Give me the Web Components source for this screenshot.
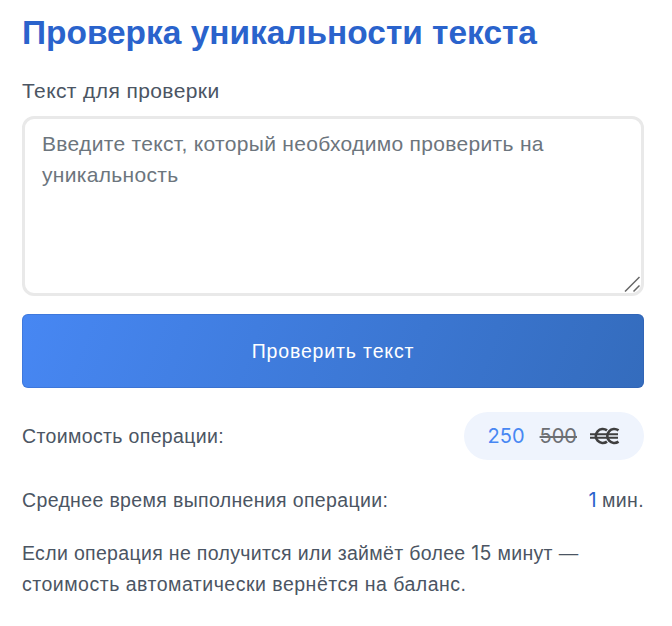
<!DOCTYPE html>
<html lang="ru">
<head>
<meta charset="utf-8">
<style>
  html, body { margin: 0; background: #fff; }
  body { font-family: "Liberation Sans", Arial, sans-serif; color: #4b5563; }
</style>
</head>
<body>
<check-form>
  <span slot="title">Проверка уникальности текста</span>
  <span slot="label">Текст для проверки</span>
  <text-field slot="field" placeholder="Введите текст, который необходимо проверить на уникальность"></text-field>
  <gradient-button slot="action">Проверить текст</gradient-button>
  <info-row slot="cost">
    <span>Стоимость операции:</span>
    <price-pill slot="value" price="250" old="500"></price-pill>
  </info-row>
  <info-row slot="time">
    <span>Среднее время выполнения операции:</span>
    <time-value slot="value" amount="1" unit="мин."></time-value>
  </info-row>
</check-form>

<script>
  class CheckForm extends HTMLElement {
    constructor() {
      super();
      this.attachShadow({ mode: "open" });
      this.shadowRoot.innerHTML = `
        <style>
          :host { display: block; box-sizing: border-box; width: 672px; padding: 12px 28px 0 22px; }
          h1 { margin: 0; font-size: 33.45px; line-height: 42px; font-weight: 700; color: #2a63cc; }
          .label { margin-top: 24px; font-size: 21px; line-height: 26px; letter-spacing: .4px; }
          .field { margin-top: 12px; }
          .action { margin-top: 18px; }
          .rows { margin-top: 24px; display: flex; flex-direction: column; gap: 16px; }
          .note { margin: 14px 0 0; font-size: 19.5px; line-height: 31px; letter-spacing: .33px; }
          .note .wide { letter-spacing: .5px; }
          .digits { font-family: Inter, sans-serif; }
        </style>
        <h1><slot name="title"></slot></h1>
        <div class="label"><slot name="label"></slot></div>
        <div class="field"><slot name="field"></slot></div>
        <div class="action"><slot name="action"></slot></div>
        <div class="rows">
          <slot name="cost"></slot>
          <slot name="time"></slot>
        </div>
        <p class="note">Если операция не получится или займёт более <span class="digits">15</span> минут —<br><span class="wide">стоимость автоматически вернётся на баланс.</span></p>
      `;
    }
  }
  customElements.define("check-form", CheckForm);

  class TextField extends HTMLElement {
    constructor() {
      super();
      this.attachShadow({ mode: "open" });
      this.shadowRoot.innerHTML = `
        <style>
          :host { display: block; position: relative; }
          textarea {
            display: block; box-sizing: border-box; width: 100%; height: 180px;
            padding: 9px 17px; border: 3px solid #e9e9e9; border-radius: 12px; outline: none; resize: none;
            font: 21px/31px "Liberation Sans", Arial, sans-serif; letter-spacing: .32px; color: #4b5563;
          }
          textarea::placeholder { color: #6c757d; opacity: 1; }
          svg { position: absolute; right: 4px; bottom: 4px; }
        </style>
        <textarea placeholder="${this.getAttribute("placeholder")}"></textarea>
        <svg width="16" height="16" viewBox="0 0 16 16" stroke="#666" stroke-width="1.5" fill="none">
          <path d="M1 15.5L15.5 1M9.5 15.5L15.5 9.5"/>
        </svg>
      `;
    }
  }
  customElements.define("text-field", TextField);

  class GradientButton extends HTMLElement {
    constructor() {
      super();
      this.attachShadow({ mode: "open" });
      this.shadowRoot.innerHTML = `
        <style>
          :host { display: block; }
          button {
            display: block; width: 100%; height: 74px; border: 0; border-radius: 6px; color: #fff;
            background: linear-gradient(110deg, #4787f3 0%, #346cbd 100%);
            box-shadow: inset 0 0 0 1px rgba(40, 80, 160, .25);
            font: 19.5px "Liberation Sans", Arial, sans-serif; letter-spacing: .85px;
          }
        </style>
        <button type="button"><slot></slot></button>
      `;
    }
  }
  customElements.define("gradient-button", GradientButton);

  class InfoRow extends HTMLElement {
    constructor() {
      super();
      this.attachShadow({ mode: "open" });
      this.shadowRoot.innerHTML = `
        <style>
          :host { display: flex; justify-content: space-between; align-items: center; min-height: 48px;
            font-size: 19.5px; letter-spacing: .35px; }
        </style>
        <div><slot></slot></div>
        <slot name="value"></slot>
      `;
    }
  }
  customElements.define("info-row", InfoRow);

  class PricePill extends HTMLElement {
    constructor() {
      super();
      this.attachShadow({ mode: "open" });
      this.shadowRoot.innerHTML = `
        <style>
          :host { display: flex; align-items: center; gap: 15px; height: 48px; padding: 0 24px;
            box-sizing: border-box; border-radius: 24px; background: #eff4fd;
            font: 20px Inter, sans-serif; letter-spacing: 0; }
          .price { color: #4787f3; }
          .old { color: #6c6f73; text-decoration: line-through; }
          svg { display: block; margin-left: -2px; }
        </style>
        <span class="price">${this.getAttribute("price")}</span>
        <span class="old">${this.getAttribute("old")}</span>
        <svg width="30" height="18" viewBox="0 0 30 18" fill="none" stroke="#3f3f3f" stroke-width="2.6">
          <path d="M17 3.4A7 7 0 1 0 17 14.6"/>
          <path d="M28.5 3.4A7 7 0 1 0 28.5 14.6"/>
          <path d="M0 7.2H28M0 10.8H28" stroke-width="2"/>
        </svg>
      `;
    }
  }
  customElements.define("price-pill", PricePill);

  class TimeValue extends HTMLElement {
    constructor() {
      super();
      this.attachShadow({ mode: "open" });
      this.shadowRoot.innerHTML = `
        <style>
          :host { display: inline-flex; gap: 5px; align-items: baseline; }
          .amount { color: #2a63cc; font-family: Inter, sans-serif; font-size: 20px; }
        </style>
        <span class="amount">${this.getAttribute("amount")}</span>
        <span>${this.getAttribute("unit")}</span>
      `;
    }
  }
  customElements.define("time-value", TimeValue);
</script>
</body>
</html>
